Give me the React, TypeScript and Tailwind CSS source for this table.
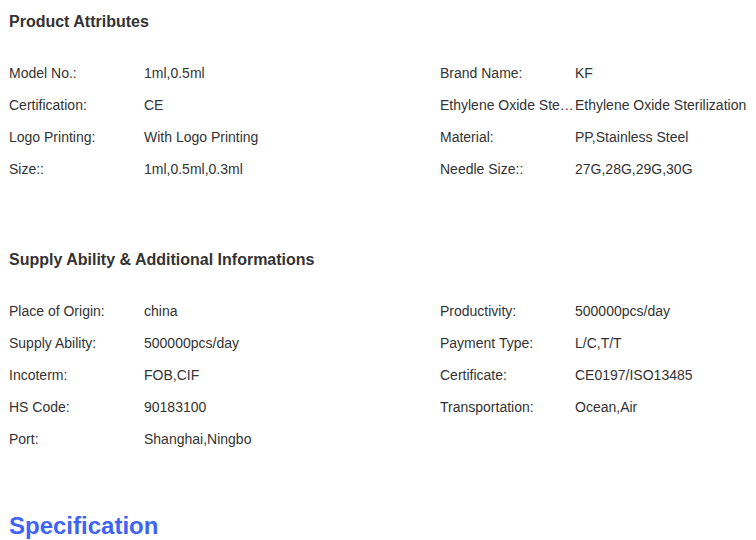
import React from 'react';

type Pair = [string, string];

const PRODUCT_ROWS: [Pair, Pair][] = [
  [['Model No.:', '1ml,0.5ml'], ['Brand Name:', 'KF']],
  [['Certification:', 'CE'], ['Ethylene Oxide Sterilization:', 'Ethylene Oxide Sterilization']],
  [['Logo Printing:', 'With Logo Printing'], ['Material:', 'PP,Stainless Steel']],
  [['Size::', '1ml,0.5ml,0.3ml'], ['Needle Size::', '27G,28G,29G,30G']],
];

const SUPPLY_ROWS: [Pair, Pair | null][] = [
  [['Place of Origin:', 'china'], ['Productivity:', '500000pcs/day']],
  [['Supply Ability:', '500000pcs/day'], ['Payment Type:', 'L/C,T/T']],
  [['Incoterm:', 'FOB,CIF'], ['Certificate:', 'CE0197/ISO13485']],
  [['HS Code:', '90183100'], ['Transportation:', 'Ocean,Air']],
  [['Port:', 'Shanghai,Ningbo'], null],
];

const Cell: React.FC<{ pair: Pair | null; fixed?: boolean }> = ({ pair, fixed }) => (
  <div className={fixed ? 'flex w-[431px] shrink-0 items-center' : 'flex flex-1 items-center'}>
    {pair && (
      <>
        <span className="w-[135px] shrink-0 truncate">{pair[0]}</span>
        <span className="whitespace-nowrap">{pair[1]}</span>
      </>
    )}
  </div>
);

const Table: React.FC<{ rows: [Pair, Pair | null][] }> = ({ rows }) => (
  <div className="mt-[23px] flex flex-col">
    {rows.map((r, i) => (
      <div key={i} className="flex h-8 items-center">
        <Cell pair={r[0]} fixed />
        <Cell pair={r[1]} />
      </div>
    ))}
  </div>
);

export default function App() {
  return (
    <div
      className="w-[756px] h-[540px] overflow-hidden bg-white pl-[9px] pt-[10px] text-[14px] text-[#333333]"
      style={{ fontFamily: '"Liberation Sans", Arial, sans-serif' }}
    >
      <h2 className="text-[16px] font-bold leading-6 text-[#333333]">Product Attributes</h2>
      <Table rows={PRODUCT_ROWS} />

      <h2 className="mt-[63px] text-[16px] font-bold leading-6 text-[#333333]">
        Supply Ability &amp; Additional Informations
      </h2>
      <Table rows={SUPPLY_ROWS} />

      <h1 className="mt-[55px] text-[24px] font-bold leading-8 text-[#3e63f6]">Specification</h1>
    </div>
  );
}
